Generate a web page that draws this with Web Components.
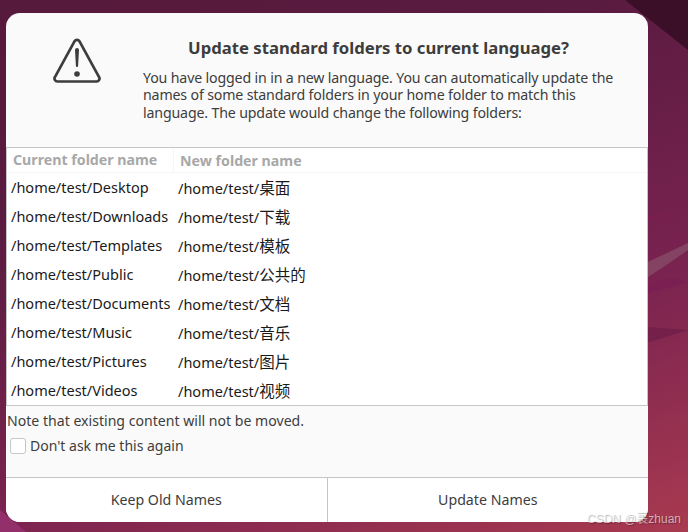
<!DOCTYPE html>
<html>
<head>
<meta charset="utf-8">
<title>Update standard folders</title>
<style>
    html, body { margin: 0; height: 100%; overflow: hidden; }
    body {
        width: 688px;
        height: 532px;
        position: relative;
        font-family: "Noto Sans", "Noto Sans CJK SC", sans-serif;
    }
</style>
</head>
<body>
<desk-wallpaper></desk-wallpaper>
<folder-dialog>
    <span slot="title">Update standard folders to current language?</span>
    <span slot="message">You have logged in in a new language. You can automatically update the<br>names of some standard folders in your home folder to match this<br>language. The update would change the following folders:</span>
    <folder-row old="/home/test/Desktop" new="桌面"></folder-row>
    <folder-row old="/home/test/Downloads" new="下载"></folder-row>
    <folder-row old="/home/test/Templates" new="模板"></folder-row>
    <folder-row old="/home/test/Public" new="公共的"></folder-row>
    <folder-row old="/home/test/Documents" new="文档"></folder-row>
    <folder-row old="/home/test/Music" new="音乐"></folder-row>
    <folder-row old="/home/test/Pictures" new="图片"></folder-row>
    <folder-row old="/home/test/Videos" new="视频"></folder-row>
</folder-dialog>
<water-mark>CSDN @裹zhuan</water-mark>
<script>
class DeskWallpaper extends HTMLElement {
    constructor() {
        super();
        this.attachShadow({ mode: 'open' });
        this.shadowRoot.innerHTML = `
            <style>
                :host {
                    position: absolute;
                    inset: 0;
                    display: block;
                    background: linear-gradient(160deg, #561a3c 0%, #5a1b40 28%, #7a2350 66%, #a93a50 100%);
                }
                svg { position: absolute; inset: 0; }
            </style>
            <svg width="688" height="532" viewBox="0 0 688 532">
                <polygon points="625,0 688,0 688,50" fill="#3a0f27"/>
                <polygon points="0,510 26,532 0,532" fill="#93306c"/>
                <polygon points="648,217 675,210 648,222" fill="#7a2050"/>
                <polygon points="648,262 688,243 688,250 662,268 648,277" fill="#854363"/>
                <polygon points="648,285 670,277 688,282 648,293" fill="#7b1f52"/>
                <polygon points="648,327 688,330 650,342 648,342" fill="#74204a"/>
            </svg>
        `;
    }
}

class FolderRow extends HTMLElement {
    constructor() {
        super();
        this.attachShadow({ mode: 'open' });
    }

    connectedCallback() {
        this.shadowRoot.innerHTML = `
            <style>
                :host { display: flex; height: 29px; align-items: center; color: #1a1a1a; font-size: 14.5px; }
                .old { width: 171px; padding-left: 4px; margin-bottom: 2px; box-sizing: border-box; white-space: nowrap; }
                .new { white-space: nowrap; }
                .new span { font-size: 15.5px; }
            </style>
            <div class="old">${this.getAttribute('old')}</div>
            <div class="new">/home/test/<span>${this.getAttribute('new')}</span></div>
        `;
    }
}

class FolderDialog extends HTMLElement {
    constructor() {
        super();
        this.attachShadow({ mode: 'open' });
        this.shadowRoot.innerHTML = `
            <style>
                :host {
                    position: absolute;
                    left: 6px;
                    top: 13px;
                    width: 642px;
                    height: 509px;
                    display: flex;
                    flex-direction: column;
                    background: #fafafa;
                    border-radius: 14px;
                    overflow: hidden;
                    color: #3d3d3d;
                    font-size: 14.2px;
                }
                .head { height: 135px; box-sizing: border-box; display: flex; border-bottom: 1px solid #c6c6c6; flex: none; }
                .icon { width: 137px; flex: none; padding: 25px 0 0 47px; box-sizing: border-box; }
                .text { flex: 1; padding-right: 34px; }
                h1 { margin: 23px 0 0; font-size: 16.7px; line-height: 24px; font-weight: 700; text-align: center; color: #3d3d3d; white-space: nowrap; }
                p { margin: 9px 0 0; line-height: 17.25px; white-space: nowrap; font-size: 14.2px; letter-spacing: -0.16px; }
                .table { height: 258px; flex: none; box-sizing: border-box; background: #fff; border-left: 1px solid #c6c6c6; border-right: 1px solid #c6c6c6; border-bottom: 1px solid #c6c6c6; display: flex; flex-direction: column; }
                .cols { height: 25px; flex: none; box-sizing: border-box; display: flex; align-items: center; border-bottom: 1px solid #f5f5f5; color: #a8a8a8; font-weight: 700; font-size: 14.2px; }
                .cols div:first-child { width: 167px; padding-left: 6px; box-sizing: border-box; border-right: 1px solid #f7f7f7; height: 24px; line-height: 24px; }
                .cols div:last-child { padding-left: 6px; }
                .rows { overflow: hidden; flex: 1; }
                .note { padding: 6px 0 0 1px; line-height: 18px; font-size: 14.1px; }
                label { display: flex; align-items: center; gap: 4px; margin: 7px 0 0 4px; line-height: 18px; font-size: 14px; }
                .box { width: 14px; height: 14px; border: 1px solid #c6c6c6; border-radius: 3px; background: #fff; }
                .spacer { flex: 1; }
                .buttons { height: 45px; flex: none; box-sizing: border-box; display: flex; background: #fff; border-top: 1px solid #c6c6c6; }
                .buttons div { flex: 1; display: flex; align-items: center; justify-content: center; padding-bottom: 2px; }
                .buttons div + div { border-left: 1px solid #c6c6c6; }
            </style>
            <div class="head">
                <div class="icon">
                    <svg width="48" height="45" viewBox="0 0 48 45" fill="none" style="display:block">
                        <path d="M21.600 3.200 a2.800 2.800 0 0 1 4.800 0 L45.800 38.600 a3 3 0 0 1 -2.600 4.900 H4.800 a3 3 0 0 1 -2.600 -4.900 Z" stroke="#3d3d3d" stroke-width="2.700" stroke-linejoin="round"/>
                        <path d="M22 12 a2 2 0 0 1 4 0 L25.100 28 a1.100 1.100 0 0 1 -2.200 0 Z" fill="#3d3d3d"/>
                        <circle cx="24" cy="36" r="2.800" fill="#3d3d3d"/>
                    </svg>
                </div>
                <div class="text">
                    <h1><slot name="title"></slot></h1>
                    <p><slot name="message"></slot></p>
                </div>
            </div>
            <div class="table">
                <div class="cols"><div>Current folder name</div><div>New folder name</div></div>
                <div class="rows"><slot></slot></div>
            </div>
            <div class="note">Note that existing content will not be moved.</div>
            <label><span class="box"></span><span>Don't ask me this again</span></label>
            <div class="spacer"></div>
            <div class="buttons"><div>Keep Old Names</div><div>Update Names</div></div>
        `;
    }
}

class WaterMark extends HTMLElement {
    constructor() {
        super();
        this.attachShadow({ mode: 'open' });
        this.shadowRoot.innerHTML = `
            <style>
                :host {
                    position: absolute;
                    right: 7px;
                    bottom: 6px;
                    font: 12px "Liberation Sans", "Noto Sans CJK SC", sans-serif;
                    color: rgba(255,255,255,0.6);
                    text-shadow: 1px 1px 1px rgba(0,0,0,0.3);
                    white-space: nowrap;
                }
            </style>
            <slot></slot>
        `;
    }
}

customElements.define('desk-wallpaper', DeskWallpaper);
customElements.define('folder-row', FolderRow);
customElements.define('folder-dialog', FolderDialog);
customElements.define('water-mark', WaterMark);
</script>
</body>
</html>
